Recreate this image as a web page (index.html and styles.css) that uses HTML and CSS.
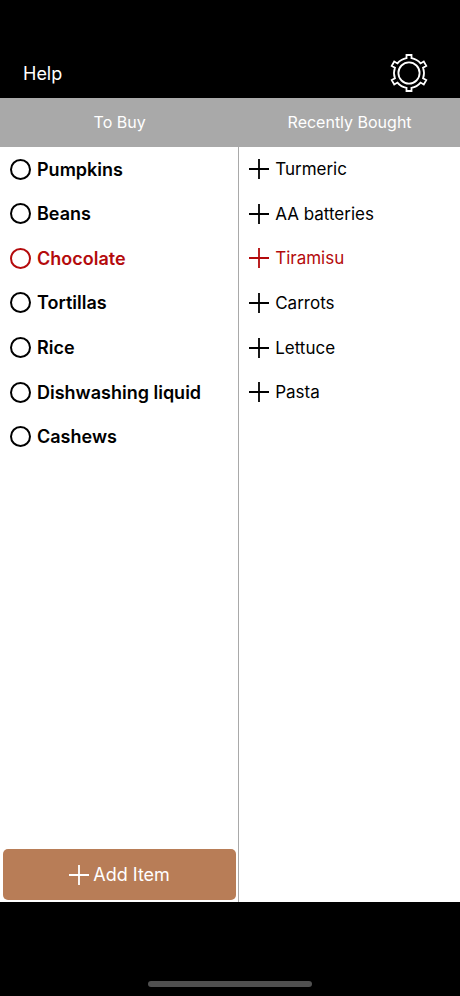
FILE: index.html
```html
<!DOCTYPE html>
<html lang="en">
<head>
<meta charset="utf-8">
<meta name="viewport" content="width=device-width, initial-scale=1">
<title>Shopping list</title>
<link rel="stylesheet" href="styles.css">
</head>
<body>
<svg class="sprite" aria-hidden="true">
  <symbol id="plus" viewBox="0 0 20 20"><path d="M10 0V20M0 10H20" fill="none" stroke="currentColor" stroke-width="1.8"/></symbol>
</svg>
<div class="app">
  <header class="toolbar">
    <a class="help" href="#help">Help</a>
    <button class="settings" type="button" aria-label="Settings">
      <svg viewBox="-20 -20 40 40" fill="none" stroke="currentColor" stroke-width="1.8">
        <circle r="10.6"/>
        <path d="M-2.5 -14.8V-18H2.5V-14.8A15 15 0 0 1 11.57 -9.57L14.77 -11.42L17.27 -7.08L14.07 -5.23A15 15 0 0 1 14.07 5.23L17.27 7.08L14.77 11.42L11.57 9.57A15 15 0 0 1 2.5 14.8V18H-2.5V14.8A15 15 0 0 1 -11.57 9.57L-14.77 11.42L-17.27 7.08L-14.07 5.23A15 15 0 0 1 -14.07 -5.23L-17.27 -7.08L-14.77 -11.42L-11.57 -9.57A15 15 0 0 1 -2.5 -14.8Z"/>
      </svg>
    </button>
  </header>
  <main class="lists">
    <section class="column to-buy">
      <h2 class="heading">To Buy</h2>
      <ul class="items">
        <li><label class="item"><input class="check" type="checkbox">Pumpkins</label></li>
        <li><label class="item"><input class="check" type="checkbox">Beans</label></li>
        <li><label class="item urgent"><input class="check" type="checkbox">Chocolate</label></li>
        <li><label class="item"><input class="check" type="checkbox">Tortillas</label></li>
        <li><label class="item"><input class="check" type="checkbox">Rice</label></li>
        <li><label class="item"><input class="check" type="checkbox">Dishwashing liquid</label></li>
        <li><label class="item"><input class="check" type="checkbox">Cashews</label></li>
      </ul>
      <button class="add" type="button"><svg class="plus"><use href="#plus"/></svg>Add Item</button>
    </section>
    <section class="column bought">
      <h2 class="heading">Recently Bought</h2>
      <ul class="items">
        <li><button class="item" type="button"><svg class="plus"><use href="#plus"/></svg>Turmeric</button></li>
        <li><button class="item" type="button"><svg class="plus"><use href="#plus"/></svg>AA batteries</button></li>
        <li><button class="item urgent" type="button"><svg class="plus"><use href="#plus"/></svg>Tiramisu</button></li>
        <li><button class="item" type="button"><svg class="plus"><use href="#plus"/></svg>Carrots</button></li>
        <li><button class="item" type="button"><svg class="plus"><use href="#plus"/></svg>Lettuce</button></li>
        <li><button class="item" type="button"><svg class="plus"><use href="#plus"/></svg>Pasta</button></li>
      </ul>
    </section>
  </main>
  <footer class="home"><div class="home-bar"></div></footer>
</div>
</body>
</html>
```
FILE: styles.css
```css
* { box-sizing: border-box; }

body {
  margin: 0;
  background: #000;
  color: #000;
  font-family: Inter, "Liberation Sans", sans-serif;
}

button {
  border: 0;
  padding: 0;
  background: none;
  color: inherit;
  font: inherit;
  cursor: pointer;
}

.sprite {
  position: absolute;
  width: 0;
  height: 0;
}

.app {
  display: flex;
  flex-direction: column;
  min-height: 100vh;
}

.toolbar {
  display: flex;
  align-items: center;
  justify-content: space-between;
  padding: 50px 31px 2px 23px;
  height: 98px;
  color: #fff;
}

.help {
  color: inherit;
  font-size: 18px;
  text-decoration: none;
}

.settings,
.settings svg {
  display: block;
  width: 40px;
  height: 40px;
}

.lists {
  flex: 1;
  display: grid;
  grid-template-columns: 52fr 48fr;
  background: #fff;
}

.column {
  display: flex;
  flex-direction: column;
}

.heading {
  margin: 0;
  background: #a9a9a9;
  color: #fff;
  font-size: 16px;
  font-weight: 400;
  line-height: 49px;
  text-align: center;
}

/* Seven equal rows keep both lists aligned side by side. */
.items {
  display: grid;
  grid-template-rows: repeat(7, 1fr);
  height: 312px;
  margin: 0;
  padding: 0;
  list-style: none;
}

.item {
  display: flex;
  align-items: center;
  gap: 6px;
  width: 100%;
  height: 100%;
  padding-left: 10px;
}

.to-buy {
  background: linear-gradient(#a9a9a9, #a9a9a9) right / 1px 100% no-repeat;
}

.to-buy .items {
  font-size: 18px;
  font-weight: 600;
}

.bought .items { font-size: 17px; }

.urgent { color: #b40a0c; }

.check {
  flex: none;
  appearance: none;
  width: 21px;
  height: 21px;
  margin: 0;
  border: 2px solid currentColor;
  border-radius: 50%;
  color: inherit;
}

.check:checked { background: currentColor; }

.plus {
  flex: none;
  width: 20px;
  height: 20px;
}

.add {
  display: flex;
  align-items: center;
  justify-content: center;
  gap: 4px;
  height: 51px;
  margin: auto 3px 2px;
  border-radius: 5px;
  background: #b87d57;
  color: #fff;
  font-size: 18px;
}

.home {
  display: flex;
  align-items: flex-end;
  justify-content: center;
  height: 94px;
  padding-bottom: 9px;
}

.home-bar {
  width: 164px;
  height: 6px;
  border-radius: 3px;
  background: #505050;
}
```
